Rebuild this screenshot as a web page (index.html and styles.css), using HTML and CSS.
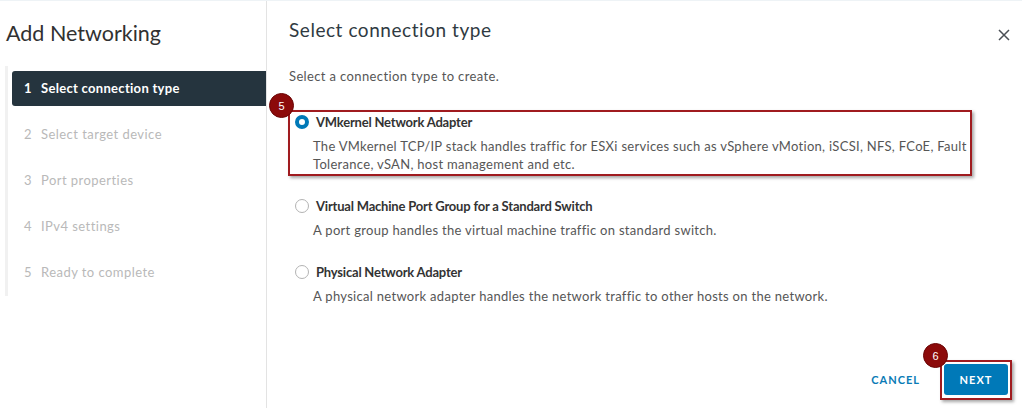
FILE: index.html
```html
<!DOCTYPE html>
<html>
<head>
<meta charset="utf-8">
<link rel="stylesheet" href="styles.css">
</head>
<body>
<div class="modal">
  <aside class="sidebar">
    <h1 class="wizard-title">Add Networking</h1>
    <ol class="steps">
      <li class="step active"><span class="num">1</span>Select connection type</li>
      <li class="step"><span class="num">2</span>Select target device</li>
      <li class="step"><span class="num">3</span>Port properties</li>
      <li class="step"><span class="num">4</span>IPv4 settings</li>
      <li class="step"><span class="num">5</span>Ready to complete</li>
    </ol>
  </aside>
  <main class="main">
    <header class="head">
      <h2 class="page-title">Select connection type</h2>
      <button class="close" aria-label="Close">
        <svg width="14" height="14" viewBox="0 0 14 14"><path d="M2 2L12 12M12 2L2 12" stroke="#4a4f55" stroke-width="1.5" fill="none"/></svg>
      </button>
    </header>
    <p class="lead">Select a connection type to create.</p>
    <div class="options">
      <div class="option">
        <div class="annot-box"></div>
        <span class="badge badge-5">5</span>
        <div class="opt-head"><span class="radio checked"></span><span class="opt-title">VMkernel Network Adapter</span></div>
        <p class="opt-desc">The VMkernel TCP/IP stack handles traffic for ESXi services such as vSphere vMotion, iSCSI, NFS, FCoE, Fault Tolerance, vSAN, host management and etc.</p>
      </div>
      <div class="option">
        <div class="opt-head"><span class="radio"></span><span class="opt-title">Virtual Machine Port Group for a Standard Switch</span></div>
        <p class="opt-desc">A port group handles the virtual machine traffic on standard switch.</p>
      </div>
      <div class="option">
        <div class="opt-head"><span class="radio"></span><span class="opt-title">Physical Network Adapter</span></div>
        <p class="opt-desc">A physical network adapter handles the network traffic to other hosts on the network.</p>
      </div>
    </div>
    <footer class="footer">
      <button class="btn btn-link">CANCEL</button>
      <div class="next-wrap">
        <span class="badge badge-6">6</span>
        <button class="btn btn-primary">NEXT</button>
      </div>
    </footer>
  </main>
</div>
</body>
</html>
```

FILE: styles.css
```css
* { box-sizing: border-box; }
html, body { margin: 0; padding: 0; }
body {
  width: 1022px;
  height: 408px;
  overflow: hidden;
  background: #fff;
  font-family: Lato, "Open Sans", sans-serif;
  color: #333;
}
.modal {
  display: flex;
  height: 408px;
  border-top: 1px solid #eef3f6;
}
.sidebar {
  width: 267px;
  flex: none;
  border-right: 1px solid #e3e3e3;
}
.wizard-title {
  margin: 0;
  padding: 19px 0 0 6px;
  font-size: 21.5px;
  line-height: 26px;
  font-weight: 400;
  color: #313131;
  letter-spacing: 0;
}
.steps {
  list-style: none;
  margin: 20px 0 0 5px;
  padding: 5px 0 6px 4px;
  border-left: 3px solid #f1f1f1;
}
.step {
  height: 35px;
  margin-bottom: 11px;
  display: flex;
  align-items: center;
  padding-left: 12px;
  font-size: 13px;
  color: #b9b9b9;
  letter-spacing: 0.45px;
  padding-bottom: 1px;
}
.step:last-child { margin-bottom: 0; }
.step .num { width: 17px; letter-spacing: 0; }
.step.active {
  background: #25343e;
  color: #fff;
  font-weight: 700;
  letter-spacing: 0.3px;
  border-radius: 3px 0 0 3px;
}
.main {
  flex: 1;
  display: flex;
  flex-direction: column;
  padding: 0 14px 13px 22px;
}
.head {
  display: flex;
  align-items: center;
  justify-content: space-between;
  padding-top: 17px;
}
.page-title {
  margin: 0;
  font-size: 19px;
  line-height: 24px;
  font-weight: 400;
  color: #2f3a42;
  letter-spacing: 0.55px;
}
.close {
  border: 0;
  background: none;
  padding: 0;
  margin: 9px -3px 0 0;
  width: 14px;
  height: 14px;
  display: flex;
}
.lead {
  margin: 25px 0 0;
  font-size: 13px;
  line-height: 18px;
  color: #565656;
  letter-spacing: 0.37px;
}
.options {
  margin-top: 28px;
  display: flex;
  flex-direction: column;
  gap: 24px;
}
.option {
  position: relative;
  padding-left: 6px;
}
.opt-head {
  display: flex;
  align-items: center;
  height: 18px;
}
.radio {
  width: 14px;
  height: 14px;
  border-radius: 50%;
  border: 1px solid #b3b3b3;
  background: #fff;
  flex: none;
  margin-right: 7px;
}
.radio.checked {
  border: 4.5px solid #0079b8;
}
.opt-title {
  font-size: 13px;
  font-weight: 700;
  color: #333;
  letter-spacing: -0.2px;
}
.opt-desc {
  margin: 6px 0 0 18px;
  font-size: 13px;
  line-height: 18px;
  color: #565656;
  max-width: 668px;
  letter-spacing: 0.3px;
}
.annot-box {
  position: absolute;
  left: -1px;
  top: -3px;
  width: 684px;
  height: 66px;
  border: 2px solid #a01b1f;
  box-shadow: 2px 2px 3px rgba(0,0,0,0.35);
  pointer-events: none;
}
.badge {
  position: absolute;
  width: 25px;
  height: 25px;
  border-radius: 50%;
  background: #8c0a0a;
  border: 1px solid #6a0505;
  color: #fff;
  font-size: 11px;
  display: flex;
  align-items: center;
  justify-content: center;
  font-family: "Liberation Sans", sans-serif;
  z-index: 2;
}
.badge-5 { left: -20px; top: -20px; }
.badge-6 { left: -21px; top: -21px; }
.footer {
  margin-top: auto;
  display: flex;
  justify-content: flex-end;
  align-items: center;
  gap: 12px;
}
.btn {
  height: 31px;
  border: 0;
  font-family: Lato, sans-serif;
  font-weight: 700;
  font-size: 11px;
  letter-spacing: 1px;
  cursor: pointer;
}
.btn-link {
  background: none;
  color: #0a7bb6;
  padding: 0 12px;
}
.next-wrap {
  position: relative;
}
.next-wrap::before {
  content: "";
  position: absolute;
  left: -4px; top: -4px; right: -4px; bottom: -5px;
  border: 2px solid #a01b1f;
  box-shadow: 2px 2px 3px rgba(0,0,0,0.35);
}
.btn-primary {
  position: relative;
  display: block;
  width: 64px;
  background: #0079b8;
  color: #fff;
  border-radius: 3px;
  padding: 0;
}
```
